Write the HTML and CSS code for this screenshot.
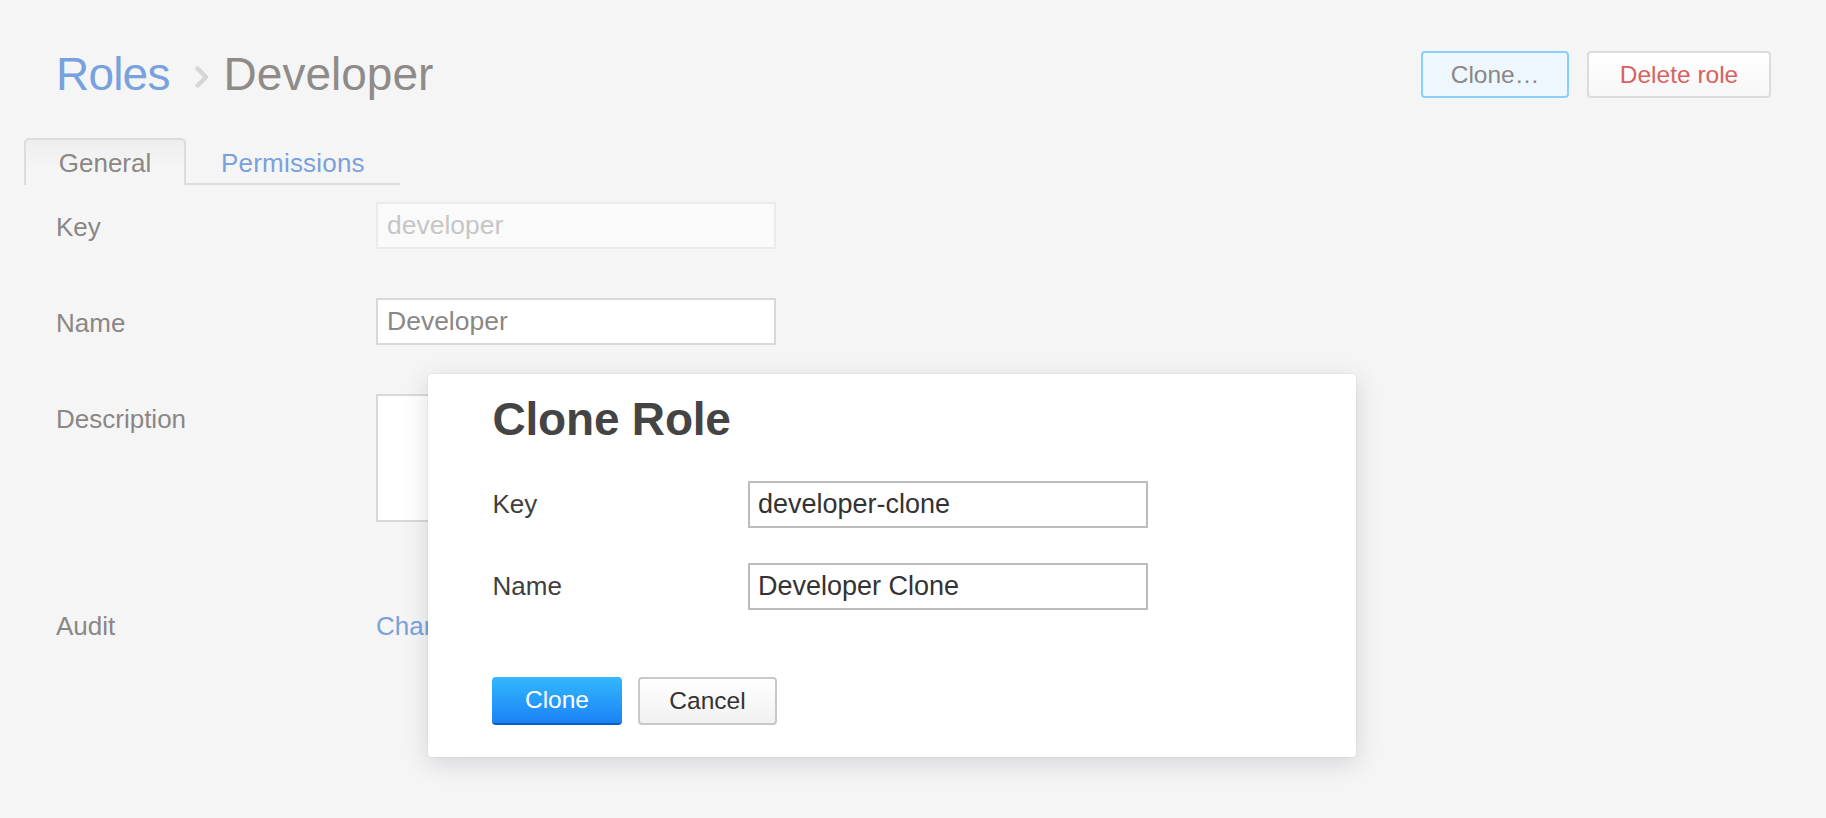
FILE: index.html
```html
<!DOCTYPE html>
<html>
<head>
<meta charset="utf-8">
<title>Roles › Developer</title>
<link rel="stylesheet" href="styles.css">
</head>
<body>
<div class="page">
  <header class="header">
    <h1 class="crumbs"><a class="crumb-link">Roles</a><svg class="crumb-sep" width="14" height="22" viewBox="0 0 14 22"><path d="M2.5 2.5 L11 11 L2.5 19.5" fill="none" stroke="#d6d6d6" stroke-width="4.5" stroke-linecap="round" stroke-linejoin="round"/></svg><span class="crumb-current">Developer</span></h1>
    <div class="actions">
      <button class="btn btn-clone-open">Clone…</button>
      <button class="btn btn-delete">Delete role</button>
    </div>
  </header>

  <nav class="tabs">
    <div class="tab tab-active">General</div>
    <div class="tab">Permissions</div>
  </nav>

  <form class="form">
    <div class="row">
      <label class="label">Key</label>
      <div class="field"><input class="input input-disabled" value="developer" disabled></div>
    </div>
    <div class="row">
      <label class="label">Name</label>
      <div class="field"><input class="input" value="Developer"></div>
    </div>
    <div class="row">
      <label class="label">Description</label>
      <div class="field"><textarea class="textarea"></textarea></div>
    </div>
    <div class="row row-audit">
      <label class="label">Audit</label>
      <div class="field"><a class="link">Changes</a></div>
    </div>
  </form>
</div>

<div class="modal">
  <h2 class="modal-title">Clone Role</h2>
  <div class="mrow">
    <label class="mlabel">Key</label>
    <input class="minput" value="developer-clone">
  </div>
  <div class="mrow">
    <label class="mlabel">Name</label>
    <input class="minput" value="Developer Clone">
  </div>
  <div class="mactions">
    <button class="mbtn mbtn-primary">Clone</button>
    <button class="mbtn mbtn-cancel">Cancel</button>
  </div>
</div>
</body>
</html>
```

FILE: styles.css
```css
* { box-sizing: border-box; }
html, body { margin: 0; padding: 0; }
body {
  background: #f5f5f5;
  font-family: "Liberation Sans", Arial, Helvetica, sans-serif;
  width: 1826px;
  height: 818px;
  overflow: hidden;
  position: relative;
}
.page {
  padding: 51px 55px 0 56px;
}
.header {
  display: flex;
  justify-content: space-between;
  align-items: center;
  height: 47px;
}
.crumbs {
  margin: 0;
  font-size: 46px;
  font-weight: normal;
  line-height: 47px;
  display: flex;
  align-items: center;
  white-space: nowrap;
}
.crumb-link { color: #78a2dd; letter-spacing: -0.8px; }
.crumb-sep {
  display: block;
  margin: 4px 15px 0 25px;
}
.crumb-current { color: #8e8b89; }
.actions { display: flex; gap: 18px; }
.btn {
  height: 47px;
  border-radius: 4px;
  font-family: inherit;
  font-size: 24.5px;
  border: 2px solid #dcdcdc;
  padding: 0;
  text-align: center;
}
.btn-clone-open {
  width: 148px;
  background: #eef7fe;
  border-color: #88d0f7;
  color: #8a8785;
}
.btn-delete {
  width: 184px;
  background: linear-gradient(#ffffff, #f7f7f7);
  color: #d8615f;
}

.tabs {
  display: flex;
  margin: 40px 0 0 -32px;
  width: 376px;
  border-bottom: 2px solid #dcdcdc;
  height: 47px;
}
.tab {
  font-size: 26px;
  color: #79a1dc;
  height: 45px;
  line-height: 50px;
  padding: 0 34px 0 35px;
  letter-spacing: 0.2px;
}
.tab-active {
  color: #8a8784;
  width: 162px;
  padding: 0;
  letter-spacing: 0;
  text-align: center;
  border: 2px solid #dcdcdc;
  border-bottom: none;
  border-radius: 5px 5px 0 0;
  background: linear-gradient(#eeeeee, #f5f5f5 60%);
  height: 47px;
  margin-bottom: -2px;
  line-height: 46px;
}

.form { margin-top: 17px; }
.row {
  display: flex;
  align-items: flex-start;
  margin-bottom: 49px;
}
.row-audit { margin-top: 79px; }
.label {
  width: 320px;
  height: 47px;
  font-size: 26px;
  color: #8a8785;
  line-height: 47px;
  padding-top: 2px;
}
.field { width: 400px; }
.input {
  display: block;
  width: 400px;
  height: 47px;
  border: 2px solid #d8d8d8;
  background: #ffffff;
  font-family: inherit;
  font-size: 26.5px;
  color: #8a8785;
  padding: 0 9px;
  border-radius: 0;
  outline: none;
}
.input-disabled {
  background: #fafafa;
  border-color: #ebebeb;
  color: #c6c6c6;
}
.textarea {
  display: block;
  width: 400px;
  height: 128px;
  border: 2px solid #d8d8d8;
  background: #fff;
  resize: none;
  border-radius: 0;
}
.link {
  font-size: 26px;
  color: #79a1dc;
  line-height: 47px;
  height: 47px;
  display: block;
  padding-top: 2px;
}

.modal {
  position: absolute;
  left: 428px;
  top: 374px;
  width: 928px;
  height: 383px;
  background: #ffffff;
  border-radius: 4px;
  box-shadow: 0 6px 24px rgba(40, 50, 70, 0.17), 0 0 0 1px rgba(40, 50, 70, 0.04);
  padding: 19px 0 0 64.5px;
}
.modal-title {
  margin: 0;
  font-size: 46px;
  font-weight: bold;
  line-height: 53px;
  color: #444444;
  letter-spacing: -0.2px;
}
.mrow {
  display: flex;
  margin-top: 35px;
}
.mlabel {
  width: 255.5px;
  font-size: 26px;
  color: #3e3e3e;
  line-height: 47px;
}
.minput {
  width: 400px;
  height: 47px;
  border: 2px solid #bcbcbc;
  font-family: inherit;
  font-size: 27px;
  color: #333333;
  padding: 0 8px;
  border-radius: 0;
  outline: none;
  background: #fff;
}
.mactions {
  display: flex;
  gap: 16px;
  margin-top: 67px;
  margin-left: -0.5px;
}
.mbtn {
  height: 48px;
  border-radius: 4px;
  font-family: inherit;
  font-size: 24.5px;
  padding: 0;
  text-align: center;
}
.mbtn-primary {
  width: 130px;
  color: #ffffff;
  border: none;
  border-bottom: 2px solid #0b5fc2;
  background: linear-gradient(#34b8fd, #1a82f6);
}
.mbtn-cancel {
  width: 139px;
  color: #333333;
  border: 2px solid #c8c8c8;
  background: linear-gradient(#ffffff, #f1f1f1);
}
```
